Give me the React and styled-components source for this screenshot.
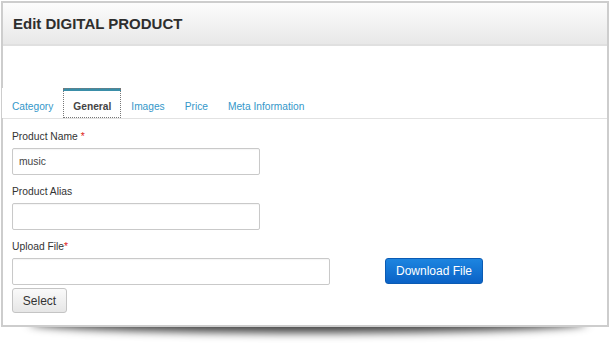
import React from "react";
import styled, { createGlobalStyle } from "styled-components";

const Global = createGlobalStyle`
  html, body { margin: 0; padding: 0; background: #ffffff; }
  body { font-family: "Liberation Sans", Arial, sans-serif; color: #333; }
  * { box-sizing: border-box; }
`;

const Page = styled.div`
  padding: 1px 0 0 1px;
  width: 611px;
  height: 349px;
`;

const PanelWrap = styled.div`
  position: relative;
  width: 608px;
  z-index: 0;
  &::before {
    content: "";
    position: absolute;
    left: 28px;
    right: 22px;
    bottom: 6px;
    height: 20px;
    border-radius: 50%;
    box-shadow: 0 12px 9px rgba(0, 0, 0, 0.72);
    z-index: -1;
  }
`;

const Panel = styled.div`
  background: #fff;
  border: 2px solid #cdcdcd;
  height: 326px;
`;

const Header = styled.div`
  height: 43px;
  background: linear-gradient(#fcfcfc, #e8e8e8);
  border-bottom: 2px solid #e0e0e0;
  display: flex;
  align-items: center;
  padding: 0 10px 1px;
`;

const Title = styled.h1`
  margin: 0;
  font-size: 15px;
  font-weight: bold;
  color: #2e2e2e;
`;

const Tabs = styled.div`
  margin-top: 42px;
  display: flex;
  border-bottom: 1px solid #e2e2e2;
  height: 31px;
`;

const Tab = styled.div`
  height: 30px;
  padding: 0 10px;
  display: flex;
  align-items: center;
  font-size: 10.2px;
  padding-top: 3px;
  color: ${(p) => (p.$active ? "#444" : "#3497c9")};
  font-weight: ${(p) => (p.$active ? "bold" : "normal")};
  background: #fff;
  border-top: 3px solid ${(p) => (p.$active ? "#3a8ea8" : "transparent")};
  outline: ${(p) => (p.$active ? "1px dotted #777" : "none")};
  outline-offset: -1px;
  margin-left: ${(p) => (p.$first ? "-1px" : "0")};
`;

const Form = styled.div`
  padding: 10px 9px 0;
  display: flex;
  flex-direction: column;
`;

const Group = styled.div`
  display: flex;
  flex-direction: column;
  gap: 3px;
  margin-bottom: ${(p) => (p.$last ? "0" : "9px")};
`;

const Label = styled.label`
  font-size: 10.3px;
  height: 16px;
  line-height: 16px;
  color: #333;
`;

const Req = styled.span`
  color: #d22;
  margin-left: ${(p) => (p.$space ? "3px" : "0")};
`;

const Input = styled.div`
  width: ${(p) => p.$w}px;
  height: 27px;
  border: 1px solid #c9c9c9;
  border-radius: 2px;
  font-size: 10.3px;
  color: #444;
  display: flex;
  align-items: center;
  padding-left: 6px;
  box-shadow: inset 0 1px 1px rgba(0, 0, 0, 0.04);
`;

const UploadRow = styled.div`
  display: flex;
  align-items: center;
  gap: 55px;
`;

const BlueButton = styled.button`
  width: 98px;
  height: 26px;
  border: 1px solid #0b5bb3;
  border-radius: 3px;
  background: linear-gradient(#1d85e0, #0a62c6);
  color: #fff;
  font-family: "Liberation Sans", Arial, sans-serif;
  font-size: 12px;
  padding: 0;
  margin-top: -1px;
`;

const GrayButton = styled.button`
  width: 55px;
  height: 25px;
  margin-top: 3px;
  border: 1px solid #c4c4c4;
  border-radius: 3px;
  background: linear-gradient(#fafafa, #e6e6e6);
  color: #333;
  font-family: "Liberation Sans", Arial, sans-serif;
  font-size: 12px;
  padding: 0;
`;

export default function App() {
  return (
    <Page>
      <Global />
      <PanelWrap>
        <Panel>
          <Header>
            <Title>Edit DIGITAL PRODUCT</Title>
          </Header>
          <Tabs>
            <Tab $first>Category</Tab>
            <Tab $active>General</Tab>
            <Tab>Images</Tab>
            <Tab>Price</Tab>
            <Tab>Meta Information</Tab>
          </Tabs>
          <Form>
            <Group>
              <Label>
                Product Name<Req $space>*</Req>
              </Label>
              <Input $w={248}>music</Input>
            </Group>
            <Group>
              <Label>Product Alias</Label>
              <Input $w={248} />
            </Group>
            <Group $last>
              <Label>
                Upload File<Req>*</Req>
              </Label>
              <UploadRow>
                <Input $w={318} />
                <BlueButton>Download File</BlueButton>
              </UploadRow>
            </Group>
            <div>
              <GrayButton>Select</GrayButton>
            </div>
          </Form>
        </Panel>
      </PanelWrap>
    </Page>
  );
}
